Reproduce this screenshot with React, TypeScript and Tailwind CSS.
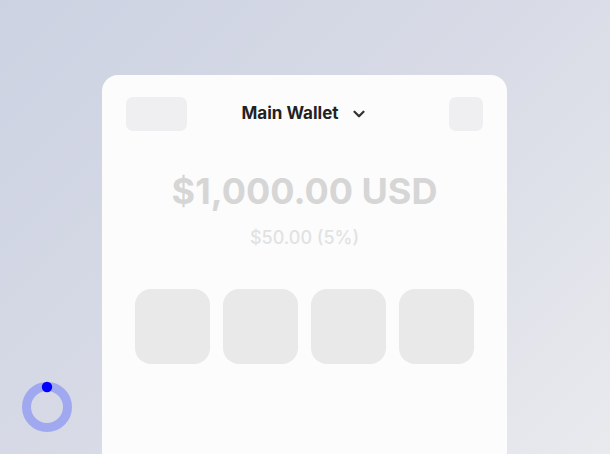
import { ChevronDown } from 'lucide-react';

function Spinner() {
  return (
    <svg width="60" height="60" viewBox="0 0 60 60" className="block">
      <circle cx="30" cy="30" r="20.5" fill="none" stroke="#a0a8ef" strokeWidth="9" />
      <circle cx="30" cy="10" r="5.2" fill="#0000ff" />
    </svg>
  );
}

export default function App() {
  return (
    <div className="relative h-[454px] w-[610px] overflow-hidden bg-[linear-gradient(135deg,#ccd2e2_0%,#d8dbe6_50%,#e9eaee_100%)] font-['Inter',sans-serif]">
      <div className="ml-[102px] mt-[75px] h-[420px] w-[405px] rounded-[16px] bg-[#fcfcfc] px-6 pt-[22px]">
        <div className="grid grid-cols-[1fr_auto_1fr] items-center">
          <div className="h-[34px] w-[61px] rounded-[7px] bg-[#efeff1]" />
          <div className="flex items-center gap-[11px]">
            <span className="text-[17px] font-bold text-[#222]">Main Wallet</span>
            <ChevronDown className="h-[18px] w-[18px] text-[#333]" strokeWidth={3} />
          </div>
          <div className="h-[34px] w-[34px] justify-self-end rounded-[7px] bg-[#efeff1]" />
        </div>
        <div className="mt-[38px] text-center text-[36px] font-bold leading-[44px] text-[#d6d6d6]">
          $1,000.00 USD
        </div>
        <div className="mt-[13px] text-center text-[18px] font-medium leading-[24px] text-[#e2e2e2]">
          $50.00 (5%)
        </div>
        <div className="mt-[39px] flex justify-center gap-[13px]">
          <div className="h-[75px] w-[75px] rounded-[16px] bg-[#e9e9e9]" />
          <div className="h-[75px] w-[75px] rounded-[16px] bg-[#e9e9e9]" />
          <div className="h-[75px] w-[75px] rounded-[16px] bg-[#e9e9e9]" />
          <div className="h-[75px] w-[75px] rounded-[16px] bg-[#e9e9e9]" />
        </div>
      </div>
      <div className="absolute left-[17px] top-[377px]">
        <Spinner />
      </div>
    </div>
  );
}
